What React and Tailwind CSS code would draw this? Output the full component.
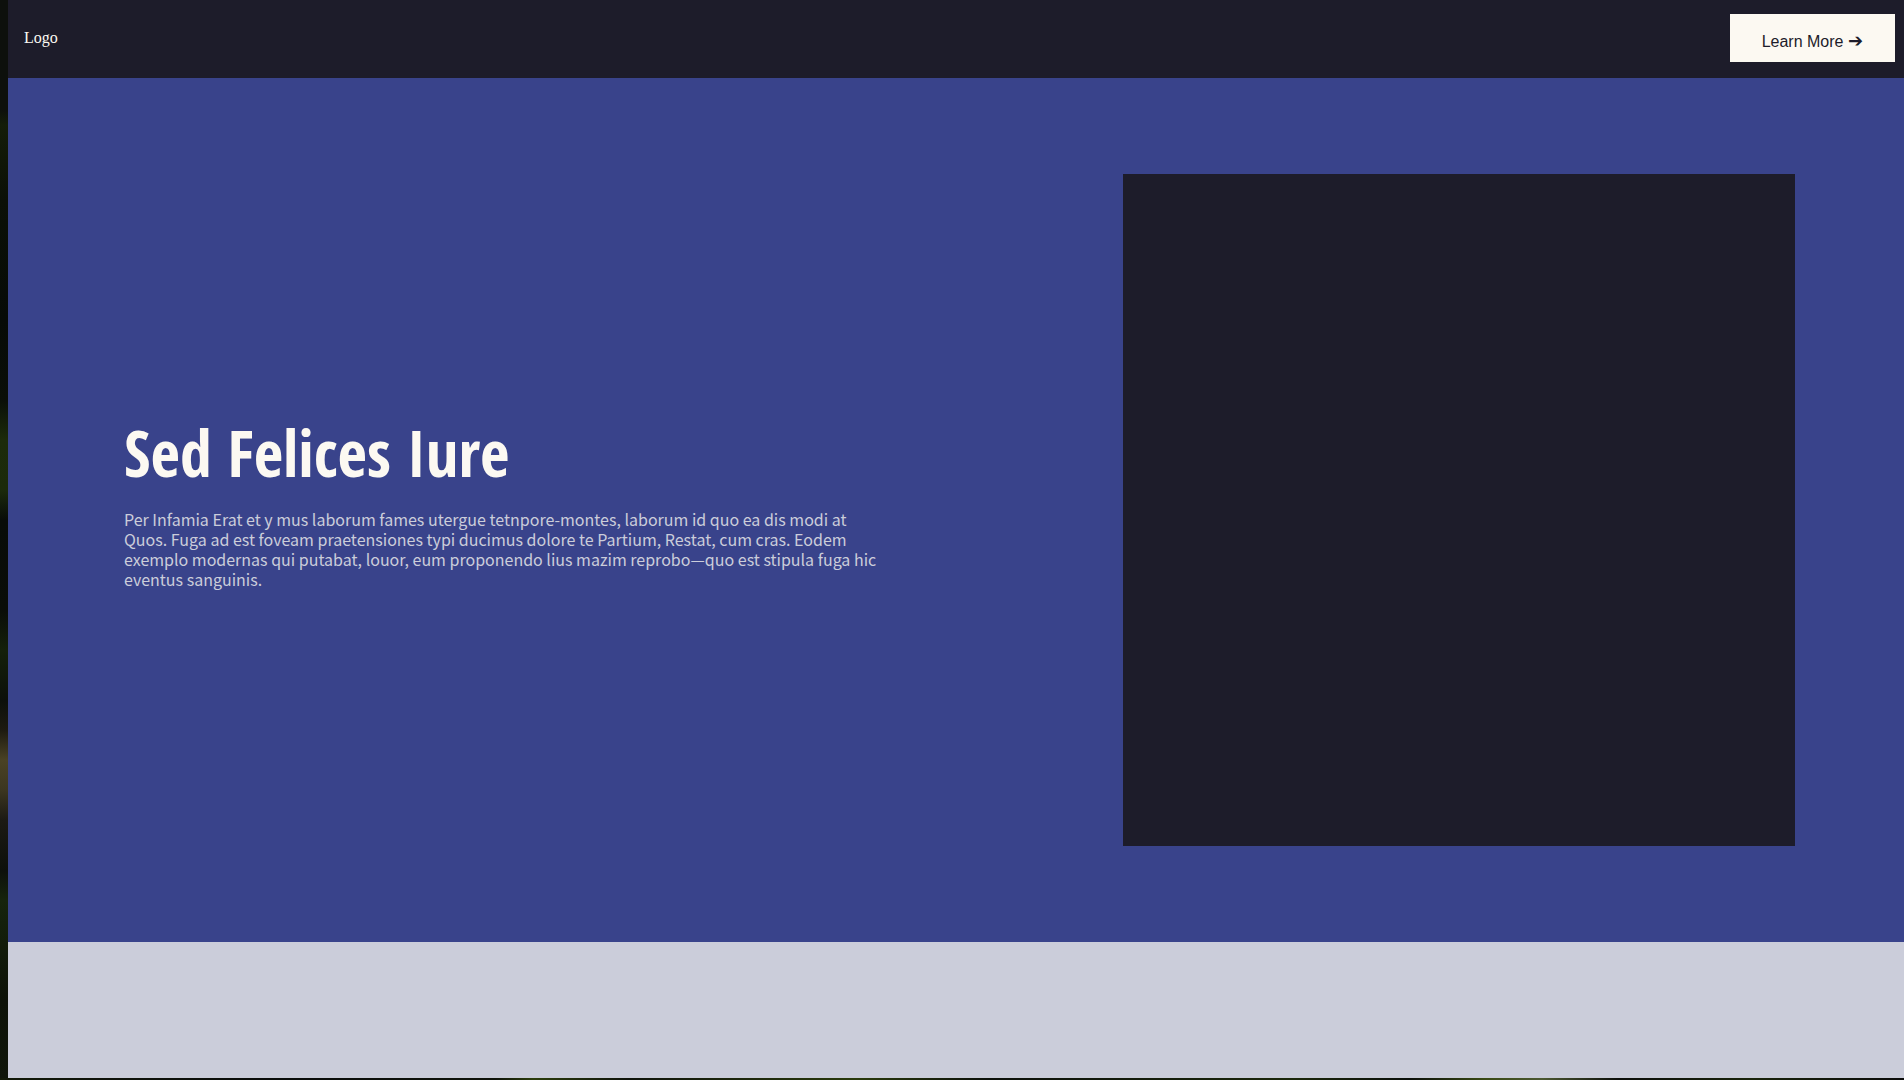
const backdrop =
  "bg-[linear-gradient(to_bottom,#0d100c_0px,#0d100c_110px,#141d08_125px,#0b1006_200px,#070b07_320px,#0a0f08_400px,#1c2b0a_440px,#1b2a0b_490px,#080c08_520px,#0a0d08_610px,#14200a_650px,#0c100a_700px,#1d1a10_730px,#4a4224_760px,#3c3620_790px,#1c1a14_820px,#0d100b_870px,#16240c_900px,#0d1208_1000px,#10160a_1078px)]";
const footerStrip =
  "bg-[linear-gradient(to_right,#131a08_0%,#10140b_5%,#0b0d0b_15%,#10140b_26%,#2c3d0c_28%,#10140c_33%,#2a3a0c_45%,#0d110b_52%,#1c280b_68%,#0c100b_74%,#3a4a14_78%,#4c5832_81%,#0d0f0b_85%,#1a240b_92%,#0c0c0b_100%)]";

export default function App() {
  return (
    <div className={`flex min-h-screen flex-col pl-2 ${backdrop}`}>
      <header className="flex items-center justify-between bg-[#1d1c2a] pt-3.5 pr-[9px] pb-4 pl-4">
        <a href="#" className="font-['Liberation_Serif',serif] text-base text-[#fcf9f2]">
          Logo
        </a>
        <button
          type="button"
          className="flex h-12 items-center bg-[#fcf9f2] px-8 pt-2 font-['Liberation_Sans',sans-serif] text-base text-[#1d1c2a]"
        >
          <span>
            Learn More{" "}
            <span className="font-['DejaVu_Sans',sans-serif] text-lg leading-none">➔</span>
          </span>
        </button>
      </header>

      <main className="flex grow flex-col">
        <section className="grid grid-cols-2 items-center bg-[#39438b] py-24 pr-[109px] pl-[116px]">
          <div className="max-w-[760px] pb-2.5">
            <h1 className="mb-6 font-['Open_Sans_Condensed','Roboto_Condensed',sans-serif] text-[64px] leading-[64px] font-extrabold text-[#fcf9f2]">
              Sed Felices Iure
            </h1>
            <p className="font-['Noto_Sans_CJK_SC',sans-serif] text-base leading-5 text-[#cbcdda]">
              Per Infamia Erat et y mus laborum fames utergue tetnpore-montes, laborum id quo ea dis
              modi at Quos. Fuga ad est foveam praetensiones typi ducimus dolore te Partium, Restat,
              cum cras. Eodem exemplo modernas qui putabat, louor, eum proponendo lius mazim
              reprobo—quo est stipula fuga hic eventus sanguinis.
            </p>
          </div>
          <div className="aspect-square w-full max-w-[672px] justify-self-end bg-[#1d1c2a]" />
        </section>
        <section className="grow bg-[#cbcdda]" />
      </main>

      <div className={`-ml-2 h-0.5 ${footerStrip}`} />
    </div>
  );
}
